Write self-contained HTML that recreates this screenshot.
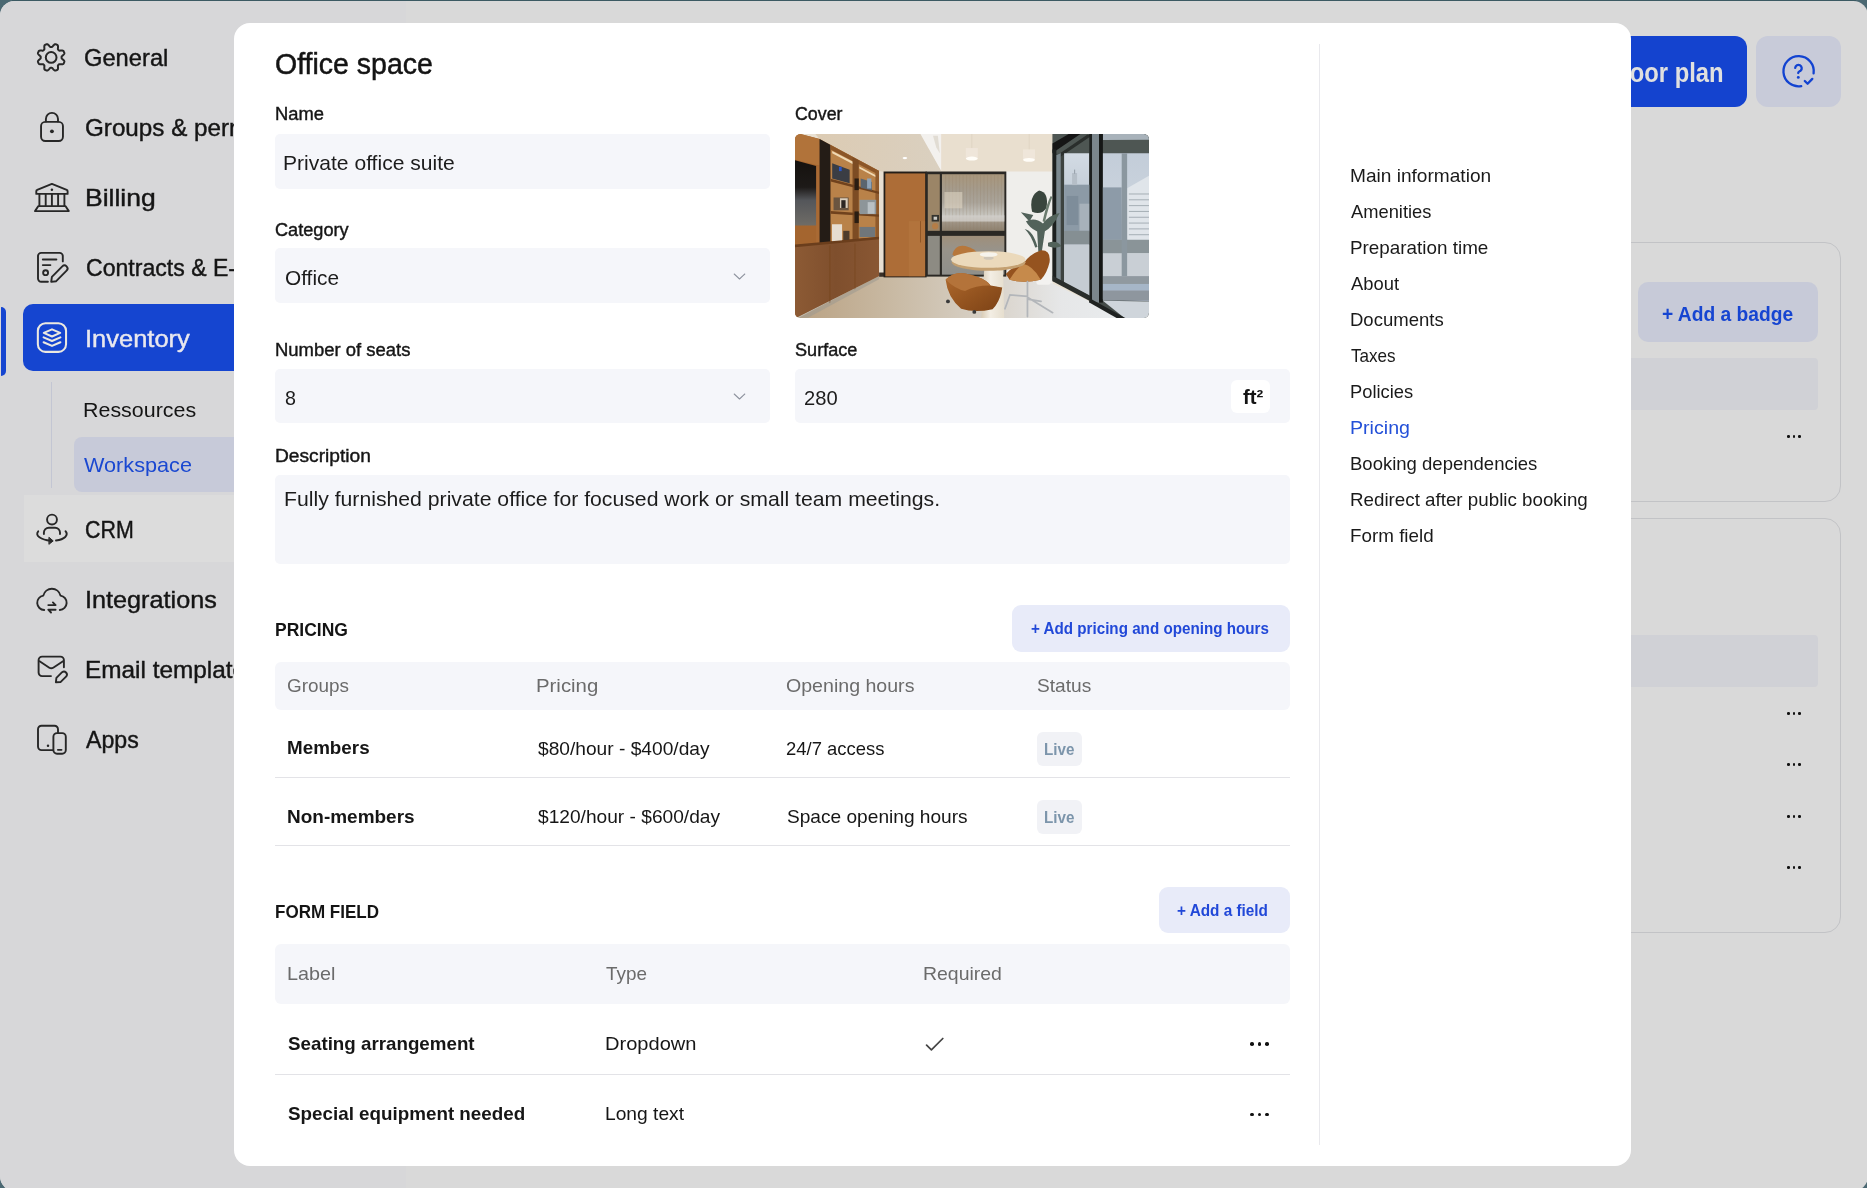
<!DOCTYPE html>
<html lang="en"><head><meta charset="utf-8"><title>Office space</title>
<style>
html,body{margin:0;padding:0}
body{width:1867px;height:1188px;overflow:hidden;background:#4b6872;font-family:"Liberation Sans",sans-serif;position:relative}
.abs,.t,.box,.dot{position:absolute}
.t{white-space:nowrap;line-height:1;transform-origin:0 0;left:0;top:0}
.dot{border-radius:50%;display:block}
.txt{position:absolute;left:0;top:0;width:100%;height:100%;will-change:transform}
#app{position:absolute;left:-.5px;top:1px;width:1868.2px;height:1189.8px;border-radius:14.7px;background:#d9d9d9;overflow:hidden}
#appin{position:absolute;left:.5px;top:-1px;width:1867px;height:1188px}
#side{position:absolute;left:0;top:0;width:406px;height:1188px;background:#d7d7d9}
.hl{left:24px;top:494.5px;width:382px;height:67px;background:#dcdcdc}
.ind{left:.9px;top:307px;width:5.3px;height:69px;border-radius:0 5px 5px 0;background:#1545d0}
.pill{left:23.1px;top:303.7px;width:300px;height:67.7px;border-radius:10px;background:#1545d0}
.vline{left:51px;top:382px;width:1px;height:106px;background:#c3c6d3}
.sub{left:74px;top:437px;width:250px;height:54.5px;border-radius:8px;background:#c7cad9}
.btnblue{left:1500px;top:35.5px;width:247px;height:71.5px;border-radius:12px;background:#1443cf}
.btnhelp{left:1755.75px;top:35.5px;width:85px;height:71.5px;border-radius:12px;background:#c8cbd9}
.card{border:1px solid #c2c3c6;border-radius:16px;box-sizing:border-box}
.badge{left:1638px;top:281.5px;width:180px;height:60px;border-radius:10px;background:#c7cad8}
.grow{background:#d0d1d6;border-radius:4px}
#modal{position:absolute;left:234px;top:23px;width:1397.3px;height:1142.5px;border-radius:16px;background:#fff;overflow:hidden}
.in{background:#f5f6fa;border-radius:5px}
.th{background:#f5f6fa;border-radius:6px}
.ln{background:#e3e3e7}
.btn{background:#e8ebf9;border-radius:9px}
.live{background:#f1f2f6;border-radius:6px}
.unit{background:#fff;border-radius:6px}
</style></head>
<body>
<div class="abs" style="left:12px;top:0;width:1844px;height:1px;background:#3c5a63"></div>
<div id="app"><div id="appin">
<aside id="side">
<div class="box hl"></div>
<div class="box ind"></div>
<div class="box pill"></div>
<div class="box vline"></div>
<div class="box sub"></div>
<svg class="abs" width="234" height="800" viewBox="0 0 234 800" fill="none" stroke="#272727" stroke-width="1.9" stroke-linecap="round" stroke-linejoin="round"><path d="M51.15 46.95 L51.28 46.95 L51.41 46.95 L51.53 46.96 L51.66 46.96 L51.79 46.96 L51.92 46.93 L52.06 46.87 L52.20 46.79 L52.34 46.66 L52.49 46.50 L52.65 46.32 L52.82 46.12 L53.00 45.92 L53.18 45.71 L53.36 45.51 L53.55 45.31 L53.75 45.12 L53.95 44.93 L54.16 44.74 L54.36 44.57 L54.57 44.42 L54.77 44.30 L54.97 44.23 L55.16 44.19 L55.34 44.18 L55.51 44.21 L55.67 44.26 L55.83 44.31 L55.99 44.37 L56.15 44.43 L56.31 44.49 L56.47 44.56 L56.63 44.62 L56.78 44.69 L56.94 44.76 L57.09 44.83 L57.25 44.91 L57.40 44.99 L57.53 45.09 L57.66 45.22 L57.76 45.38 L57.85 45.58 L57.91 45.80 L57.95 46.05 L57.98 46.32 L57.99 46.60 L58.00 46.88 L58.00 47.15 L57.99 47.43 L57.98 47.70 L57.96 47.97 L57.94 48.24 L57.92 48.50 L57.90 48.75 L57.90 48.96 L57.92 49.16 L57.95 49.32 L58.01 49.45 L58.08 49.56 L58.17 49.66 L58.26 49.74 L58.36 49.83 L58.45 49.92 L58.54 50.01 L58.63 50.10 L58.72 50.19 L58.81 50.29 L58.89 50.38 L58.99 50.47 L59.10 50.54 L59.23 50.60 L59.39 50.63 L59.59 50.65 L59.80 50.65 L60.05 50.63 L60.31 50.61 L60.58 50.59 L60.85 50.57 L61.12 50.56 L61.40 50.55 L61.67 50.55 L61.95 50.56 L62.23 50.57 L62.50 50.60 L62.75 50.64 L62.97 50.70 L63.17 50.79 L63.33 50.89 L63.46 51.02 L63.56 51.15 L63.64 51.30 L63.72 51.46 L63.79 51.61 L63.86 51.77 L63.93 51.92 L63.99 52.08 L64.06 52.24 L64.12 52.40 L64.18 52.56 L64.24 52.72 L64.29 52.88 L64.34 53.04 L64.37 53.21 L64.36 53.39 L64.32 53.58 L64.25 53.78 L64.13 53.98 L63.98 54.19 L63.81 54.39 L63.62 54.60 L63.43 54.80 L63.24 55.00 L63.04 55.19 L62.84 55.37 L62.63 55.55 L62.43 55.73 L62.23 55.90 L62.05 56.06 L61.89 56.21 L61.76 56.35 L61.68 56.49 L61.62 56.63 L61.59 56.76 L61.59 56.89 L61.59 57.02 L61.60 57.14 L61.60 57.27 L61.60 57.40 L61.60 57.53 L61.60 57.66 L61.59 57.78 L61.59 57.91 L61.59 58.04 L61.62 58.17 L61.68 58.31 L61.76 58.45 L61.89 58.59 L62.05 58.74 L62.23 58.90 L62.43 59.07 L62.63 59.25 L62.84 59.43 L63.04 59.61 L63.24 59.80 L63.43 60.00 L63.62 60.20 L63.81 60.41 L63.98 60.61 L64.13 60.82 L64.25 61.02 L64.32 61.22 L64.36 61.41 L64.37 61.59 L64.34 61.76 L64.29 61.92 L64.24 62.08 L64.18 62.24 L64.12 62.40 L64.06 62.56 L63.99 62.72 L63.93 62.88 L63.86 63.03 L63.79 63.19 L63.72 63.34 L63.64 63.50 L63.56 63.65 L63.46 63.78 L63.33 63.91 L63.17 64.01 L62.97 64.10 L62.75 64.16 L62.50 64.20 L62.23 64.23 L61.95 64.24 L61.67 64.25 L61.40 64.25 L61.12 64.24 L60.85 64.23 L60.58 64.21 L60.31 64.19 L60.05 64.17 L59.80 64.15 L59.59 64.15 L59.39 64.17 L59.23 64.20 L59.10 64.26 L58.99 64.33 L58.89 64.42 L58.81 64.51 L58.72 64.61 L58.63 64.70 L58.54 64.79 L58.45 64.88 L58.36 64.97 L58.26 65.06 L58.17 65.14 L58.08 65.24 L58.01 65.35 L57.95 65.48 L57.92 65.64 L57.90 65.84 L57.90 66.05 L57.92 66.30 L57.94 66.56 L57.96 66.83 L57.98 67.10 L57.99 67.37 L58.00 67.65 L58.00 67.92 L57.99 68.20 L57.98 68.48 L57.95 68.75 L57.91 69.00 L57.85 69.22 L57.76 69.42 L57.66 69.58 L57.53 69.71 L57.40 69.81 L57.25 69.89 L57.09 69.97 L56.94 70.04 L56.78 70.11 L56.63 70.18 L56.47 70.24 L56.31 70.31 L56.15 70.37 L55.99 70.43 L55.83 70.49 L55.67 70.54 L55.51 70.59 L55.34 70.62 L55.16 70.61 L54.97 70.57 L54.77 70.50 L54.57 70.38 L54.36 70.23 L54.16 70.06 L53.95 69.87 L53.75 69.68 L53.55 69.49 L53.36 69.29 L53.18 69.09 L53.00 68.88 L52.82 68.68 L52.65 68.48 L52.49 68.30 L52.34 68.14 L52.20 68.01 L52.06 67.93 L51.92 67.87 L51.79 67.84 L51.66 67.84 L51.53 67.84 L51.41 67.85 L51.28 67.85 L51.15 67.85 L51.02 67.85 L50.89 67.85 L50.77 67.84 L50.64 67.84 L50.51 67.84 L50.38 67.87 L50.24 67.93 L50.10 68.01 L49.96 68.14 L49.81 68.30 L49.65 68.48 L49.48 68.68 L49.30 68.88 L49.12 69.09 L48.94 69.29 L48.75 69.49 L48.55 69.68 L48.35 69.87 L48.14 70.06 L47.94 70.23 L47.73 70.38 L47.53 70.50 L47.33 70.57 L47.14 70.61 L46.96 70.62 L46.79 70.59 L46.63 70.54 L46.47 70.49 L46.31 70.43 L46.15 70.37 L45.99 70.31 L45.83 70.24 L45.67 70.18 L45.52 70.11 L45.36 70.04 L45.21 69.97 L45.05 69.89 L44.90 69.81 L44.77 69.71 L44.64 69.58 L44.54 69.42 L44.45 69.22 L44.39 69.00 L44.35 68.75 L44.32 68.48 L44.31 68.20 L44.30 67.92 L44.30 67.65 L44.31 67.37 L44.32 67.10 L44.34 66.83 L44.36 66.56 L44.38 66.30 L44.40 66.05 L44.40 65.84 L44.38 65.64 L44.35 65.48 L44.29 65.35 L44.22 65.24 L44.13 65.14 L44.04 65.06 L43.94 64.97 L43.85 64.88 L43.76 64.79 L43.67 64.70 L43.58 64.61 L43.49 64.51 L43.41 64.42 L43.31 64.33 L43.20 64.26 L43.07 64.20 L42.91 64.17 L42.71 64.15 L42.50 64.15 L42.25 64.17 L41.99 64.19 L41.72 64.21 L41.45 64.23 L41.18 64.24 L40.90 64.25 L40.63 64.25 L40.35 64.24 L40.07 64.23 L39.80 64.20 L39.55 64.16 L39.33 64.10 L39.13 64.01 L38.97 63.91 L38.84 63.78 L38.74 63.65 L38.66 63.50 L38.58 63.34 L38.51 63.19 L38.44 63.03 L38.37 62.88 L38.31 62.72 L38.24 62.56 L38.18 62.40 L38.12 62.24 L38.06 62.08 L38.01 61.92 L37.96 61.76 L37.93 61.59 L37.94 61.41 L37.98 61.22 L38.05 61.02 L38.17 60.82 L38.32 60.61 L38.49 60.41 L38.68 60.20 L38.87 60.00 L39.06 59.80 L39.26 59.61 L39.46 59.43 L39.67 59.25 L39.87 59.07 L40.07 58.90 L40.25 58.74 L40.41 58.59 L40.54 58.45 L40.62 58.31 L40.68 58.17 L40.71 58.04 L40.71 57.91 L40.71 57.78 L40.70 57.66 L40.70 57.53 L40.70 57.40 L40.70 57.27 L40.70 57.14 L40.71 57.02 L40.71 56.89 L40.71 56.76 L40.68 56.63 L40.62 56.49 L40.54 56.35 L40.41 56.21 L40.25 56.06 L40.07 55.90 L39.87 55.73 L39.67 55.55 L39.46 55.37 L39.26 55.19 L39.06 55.00 L38.87 54.80 L38.68 54.60 L38.49 54.39 L38.32 54.19 L38.17 53.98 L38.05 53.78 L37.98 53.58 L37.94 53.39 L37.93 53.21 L37.96 53.04 L38.01 52.88 L38.06 52.72 L38.12 52.56 L38.18 52.40 L38.24 52.24 L38.31 52.08 L38.37 51.92 L38.44 51.77 L38.51 51.61 L38.58 51.46 L38.66 51.30 L38.74 51.15 L38.84 51.02 L38.97 50.89 L39.13 50.79 L39.33 50.70 L39.55 50.64 L39.80 50.60 L40.07 50.57 L40.35 50.56 L40.63 50.55 L40.90 50.55 L41.18 50.56 L41.45 50.57 L41.72 50.59 L41.99 50.61 L42.25 50.63 L42.50 50.65 L42.71 50.65 L42.91 50.63 L43.07 50.60 L43.20 50.54 L43.31 50.47 L43.41 50.38 L43.49 50.29 L43.58 50.19 L43.67 50.10 L43.76 50.01 L43.85 49.92 L43.94 49.83 L44.04 49.74 L44.13 49.66 L44.22 49.56 L44.29 49.45 L44.35 49.32 L44.38 49.16 L44.40 48.96 L44.40 48.75 L44.38 48.50 L44.36 48.24 L44.34 47.97 L44.32 47.70 L44.31 47.43 L44.30 47.15 L44.30 46.88 L44.31 46.60 L44.32 46.32 L44.35 46.05 L44.39 45.80 L44.45 45.58 L44.54 45.38 L44.64 45.22 L44.77 45.09 L44.90 44.99 L45.05 44.91 L45.21 44.83 L45.36 44.76 L45.52 44.69 L45.67 44.62 L45.83 44.56 L45.99 44.49 L46.15 44.43 L46.31 44.37 L46.47 44.31 L46.63 44.26 L46.79 44.21 L46.96 44.18 L47.14 44.19 L47.33 44.23 L47.53 44.30 L47.73 44.42 L47.94 44.57 L48.14 44.74 L48.35 44.93 L48.55 45.12 L48.75 45.31 L48.94 45.51 L49.12 45.71 L49.30 45.92 L49.48 46.12 L49.65 46.32 L49.81 46.50 L49.96 46.66 L50.10 46.79 L50.24 46.87 L50.38 46.93 L50.51 46.96 L50.64 46.96 L50.77 46.96 L50.89 46.95 L51.02 46.95Z" stroke-width="2"/><circle cx="51.15" cy="57.4" r="5.35" stroke-width="2"/><rect x="41.05" y="121.85" width="21.9" height="19.2" rx="4.2"/><path d="M45.9 121.6V118.9a6.05 6.05 0 0 1 12.1 0V121.6"/><circle cx="51.95" cy="131.3" r="1.9" fill="#272727" stroke="none"/><path d="M51.9 183.9L37.2 189.9a1.4 1.4 0 0 0-.9 1.3V193.9H67.6V191.2a1.4 1.4 0 0 0-.9-1.3Z"/><circle cx="51.9" cy="189.7" r="1.25" fill="#272727" stroke="none"/><path d="M39.4 194V206M45.7 194V206M51.9 194V206M58.1 194V206M64.4 194V206M38.6 206.1H65.2M38.2 206.3L35 211.1H68.8L65.6 206.3"/><path d="M47.9 281.8H41.2a3.2 3.2 0 0 1-3.2-3.2V256.1a3.2 3.2 0 0 1 3.2-3.2H59.6a3.2 3.2 0 0 1 3.2 3.2V261.4"/><path d="M42.8 259.5H56.4M42.8 265.1H50.4"/><circle cx="45.6" cy="272.7" r="2.45"/><path d="M51.2 281.9L51.9 276.9L62.3 266.4a3 3 0 0 1 4.3 4.3L56.2 281.2Z"/><circle cx="52" cy="519.6" r="4.95"/><path d="M43.9 534.1V532.6a4.9 4.9 0 0 1 4.9-4.9H55.1a4.9 4.9 0 0 1 4.9 4.9V534.1"/><path d="M38.2 531.3C34.6 535.5 41 539.8 50.6 540.7M56 540.5C64.5 539.3 69 535.3 65.5 531.2"/><path d="M49.2 537.5L53.2 540.9L49.2 544.1Z" fill="#272727" stroke-width="1"/><path d="M44.2 610A7.25 7.25 0 0 1 43.3 595.6A8.84 8.84 0 0 1 60.5 595.6A7.25 7.25 0 0 1 59.8 610"/><path d="M48.3 605.1H55.6L52.9 602.4M55.6 609.7H48.3L51 612.5"/><path d="M51 676.1H42.1a3.5 3.5 0 0 1-3.5-3.5V660.1a3.5 3.5 0 0 1 3.5-3.5H60.4a3.5 3.5 0 0 1 3.5 3.5V667.3"/><path d="M39.6 661.2L49.3 667.7a3.6 3.6 0 0 0 3.9 0L63 661.2"/><path d="M55.9 682.2L56.4 677.9L62.1 672.2a3 3 0 0 1 4.2 4.2L60.5 682.1Z"/><path d="M53 750.1H41.5a3.5 3.5 0 0 1-3.5-3.5V729.2a3.5 3.5 0 0 1 3.5-3.5H54.5a3.5 3.5 0 0 1 3.5 3.5V732.6"/><circle cx="48" cy="745.8" r="1.25" fill="#272727" stroke="none"/><rect x="53.4" y="733.1" width="12.4" height="20.6" rx="3.6"/><path d="M57.9 749.85H61.5"/></svg>
<svg class="abs" style="left:30px;top:315px" width="44" height="44" viewBox="30 315 44 44" fill="none" stroke="#ece9e0" stroke-width="2.05" stroke-linecap="round" stroke-linejoin="round"><rect x="37.85" y="323.25" width="28.2" height="28.6" rx="7.6"/><path d="M52 329.4L60.2 332.9L52 336.5L43.8 332.9Z"/><path d="M43.6 337.4L52 341L60.4 337.4M43.6 342.2L52 345.9L60.4 342.2"/></svg>
<div class="txt">
<span class="t" style="left:84px;top:46px;font-size:24.1px;color:#151515;-webkit-text-stroke:0.42px #151515;transform:scaleX(0.9838)">General</span>
<span class="t" style="left:85px;top:116px;font-size:24.1px;color:#151515;-webkit-text-stroke:0.42px #151515;transform:scaleX(1.0050)">Groups &amp; permissions</span>
<span class="t" style="left:85px;top:186px;font-size:24.1px;color:#151515;-webkit-text-stroke:0.42px #151515;transform:scaleX(1.1008)">Billing</span>
<span class="t" style="left:86px;top:256px;font-size:24.1px;color:#151515;-webkit-text-stroke:0.42px #151515;transform:scaleX(0.9577)">Contracts &amp; E-signatures</span>
<span class="t" style="left:85px;top:327px;font-size:24.1px;color:#e9e8ee;-webkit-text-stroke:0.42px #e9e8ee;transform:scaleX(1.0571)">Inventory</span>
<span class="t" style="left:83px;top:400px;font-size:20.6px;color:#141414;transform:scaleX(1.0405)">Ressources</span>
<span class="t" style="left:84px;top:455px;font-size:20.4px;color:#1a48d1;transform:scaleX(1.0621)">Workspace</span>
<span class="t" style="left:85px;top:518px;font-size:24.1px;color:#151515;-webkit-text-stroke:0.42px #151515;transform:scaleX(0.8879)">CRM</span>
<span class="t" style="left:85px;top:588px;font-size:24.1px;color:#151515;-webkit-text-stroke:0.42px #151515;transform:scaleX(1.0468)">Integrations</span>
<span class="t" style="left:85px;top:658px;font-size:24.1px;color:#151515;-webkit-text-stroke:0.42px #151515;transform:scaleX(1.0110)">Email templates</span>
<span class="t" style="left:86px;top:728px;font-size:24.1px;color:#151515;-webkit-text-stroke:0.42px #151515;transform:scaleX(0.9605)">Apps</span>
</div>
</aside>
<main id="main">
<div class="box btnblue"></div>
<div class="box btnhelp"></div>
<svg class="abs" style="left:1775px;top:48px" width="48" height="48" viewBox="1775 48 48 48" fill="none" stroke="#1243d1" stroke-width="2.3" stroke-linecap="round" stroke-linejoin="round"><path d="M1813.60 73.36A15.15 15.15 0 1 0 1801.23 86.17"/><path d="M1804.8 81L1807.6 83.8L1812.3 78.9"/><path d="M1795.2 67.9a3.27 3.27 0 1 1 5.4 2.8c-1.4 .9-2.4 1.3-2.4 2.4"/><circle cx="1798.3" cy="77.4" r="1.45" fill="#1243d1" stroke="none"/></svg>
<div class="box card" style="left:1500px;top:241.5px;width:341px;height:260px"></div>
<div class="box card" style="left:1500px;top:518px;width:341px;height:414.5px"></div>
<div class="box badge"></div>
<div class="box grow" style="left:1500px;top:358px;width:318px;height:52px"></div>
<div class="box grow" style="left:1500px;top:634.5px;width:318px;height:52.5px"></div>
<i class="dot" style="left:1787.45px;top:435.20px;width:2.60px;height:2.60px;background:#111"></i><i class="dot" style="left:1792.70px;top:435.20px;width:2.60px;height:2.60px;background:#111"></i><i class="dot" style="left:1797.95px;top:435.20px;width:2.60px;height:2.60px;background:#111"></i>
<i class="dot" style="left:1787.45px;top:711.95px;width:2.60px;height:2.60px;background:#111"></i><i class="dot" style="left:1792.70px;top:711.95px;width:2.60px;height:2.60px;background:#111"></i><i class="dot" style="left:1797.95px;top:711.95px;width:2.60px;height:2.60px;background:#111"></i>
<i class="dot" style="left:1787.45px;top:763.45px;width:2.60px;height:2.60px;background:#111"></i><i class="dot" style="left:1792.70px;top:763.45px;width:2.60px;height:2.60px;background:#111"></i><i class="dot" style="left:1797.95px;top:763.45px;width:2.60px;height:2.60px;background:#111"></i>
<i class="dot" style="left:1787.45px;top:814.95px;width:2.60px;height:2.60px;background:#111"></i><i class="dot" style="left:1792.70px;top:814.95px;width:2.60px;height:2.60px;background:#111"></i><i class="dot" style="left:1797.95px;top:814.95px;width:2.60px;height:2.60px;background:#111"></i>
<i class="dot" style="left:1787.45px;top:866.20px;width:2.60px;height:2.60px;background:#111"></i><i class="dot" style="left:1792.70px;top:866.20px;width:2.60px;height:2.60px;background:#111"></i><i class="dot" style="left:1797.95px;top:866.20px;width:2.60px;height:2.60px;background:#111"></i>
<div class="txt">
<span class="t" style="left:1523px;top:59px;font-size:27.6px;font-weight:700;color:#e0e0df;transform:scaleX(0.8619)">+ Add a floor plan</span>
<span class="t" style="left:1662px;top:304px;font-size:20.1px;font-weight:700;color:#1645d1;transform:scaleX(0.9561)">+ Add a badge</span>
</div>
</main>
</div></div>
<section id="modal">
<div class="box in" style="left:41px;top:110.75px;width:495px;height:55px;"></div>
<div class="box in" style="left:41px;top:225.25px;width:495px;height:55px;"></div>
<div class="box in" style="left:41px;top:345.5px;width:495px;height:54.75px;"></div>
<div class="box in" style="left:560.5px;top:345.5px;width:495.3px;height:54.75px;"></div>
<div class="box in" style="left:41px;top:452px;width:1014.5px;height:89px;"></div>
<div class="box unit" style="left:996.6px;top:356.5px;width:39.1px;height:33.7px;"></div>
<svg class="abs" style="left:499.25px;top:248.8px" width="14" height="10" viewBox="0 0 14 10" fill="none" stroke="#8d929d" stroke-width="1.05" stroke-linecap="round" stroke-linejoin="round"><path d="M1.2 2L6.5 7L11.8 2"/></svg>
<svg class="abs" style="left:499.25px;top:368.9px" width="14" height="10" viewBox="0 0 14 10" fill="none" stroke="#8d929d" stroke-width="1.05" stroke-linecap="round" stroke-linejoin="round"><path d="M1.2 2L6.5 7L11.8 2"/></svg>
<div class="box btn" style="left:778px;top:582px;width:277.5px;height:47px;"></div>
<div class="box th" style="left:41px;top:639px;width:1014.5px;height:47.75px;"></div>
<div class="box ln" style="left:41px;top:753.7px;width:1014.5px;height:1.1px;"></div>
<div class="box ln" style="left:41px;top:821.6px;width:1014.5px;height:1.1px;"></div>
<div class="box live" style="left:802.5px;top:709.25px;width:45.5px;height:33.75px;"></div>
<div class="box live" style="left:802.5px;top:777.25px;width:45.5px;height:33.75px;"></div>
<div class="box btn" style="left:925px;top:863.75px;width:130.5px;height:46.25px;"></div>
<div class="box th" style="left:41px;top:920.5px;width:1014.5px;height:60px;"></div>
<div class="box ln" style="left:41px;top:1050.5px;width:1014.5px;height:1.1px;"></div>
<div class="box " style="left:1085.1px;top:20.5px;width:1.25px;height:1101.5px;background:#e9e9ed"></div>
<svg class="abs" style="left:691px;top:1013.6px" width="20" height="15" viewBox="0 0 20 15" fill="none" stroke="#444" stroke-width="1.7" stroke-linecap="round" stroke-linejoin="round"><path d="M1.6 8.2L6.4 12.9L17.8 1.5"/></svg>
<div class="abs" style="left:-234px;top:-23px"><i class="dot" style="left:1250.00px;top:1042.25px;width:3.50px;height:3.50px;background:#111"></i><i class="dot" style="left:1257.50px;top:1042.25px;width:3.50px;height:3.50px;background:#111"></i><i class="dot" style="left:1265.00px;top:1042.25px;width:3.50px;height:3.50px;background:#111"></i><i class="dot" style="left:1250.00px;top:1112.75px;width:3.50px;height:3.50px;background:#111"></i><i class="dot" style="left:1257.50px;top:1112.75px;width:3.50px;height:3.50px;background:#111"></i><i class="dot" style="left:1265.00px;top:1112.75px;width:3.50px;height:3.50px;background:#111"></i></div>
<svg class="abs" style="left:560.5px;top:111px;border-radius:5.5px" width="354" height="183.5" viewBox="0 0 354 183.5"><defs><linearGradient id="gTv" x1="0" y1="0" x2="0" y2="1"><stop offset="0" stop-color="#15110e"/><stop offset=".42" stop-color="#1d1a18"/><stop offset=".62" stop-color="#54565a"/><stop offset="1" stop-color="#6f6c66"/></linearGradient><linearGradient id="gGl" x1="0" y1="0" x2="0" y2="1"><stop offset="0" stop-color="#a8967b"/><stop offset=".3" stop-color="#a59c8e"/><stop offset=".5" stop-color="#aaa49a"/><stop offset=".72" stop-color="#c6c4be"/><stop offset=".86" stop-color="#9e9384"/><stop offset="1" stop-color="#8e816f"/></linearGradient><linearGradient id="gGl2" x1="0" y1="0" x2="0" y2="1"><stop offset="0" stop-color="#9f8f7a"/><stop offset=".35" stop-color="#98938a"/><stop offset="1" stop-color="#8f8f8b"/></linearGradient><linearGradient id="gFl" x1="0" y1="0" x2="1" y2="0"><stop offset="0" stop-color="#b9a182"/><stop offset=".3" stop-color="#c9baa4"/><stop offset=".6" stop-color="#d9d3ca"/><stop offset=".8" stop-color="#e6e7e8"/><stop offset="1" stop-color="#e9ecee"/></linearGradient><linearGradient id="gW1" x1="0" y1="0" x2="0" y2="1"><stop offset="0" stop-color="#d3dbe4"/><stop offset=".3" stop-color="#c2ccd6"/><stop offset=".45" stop-color="#9aa5ae"/><stop offset=".7" stop-color="#a9b1b8"/><stop offset="1" stop-color="#c2c8cd"/></linearGradient><linearGradient id="gW2" x1="0" y1="0" x2="0" y2="1"><stop offset="0" stop-color="#c3cdd9"/><stop offset=".28" stop-color="#c9d2dc"/><stop offset=".5" stop-color="#a3adb6"/><stop offset=".75" stop-color="#b3bac1"/><stop offset="1" stop-color="#a9b4c6"/></linearGradient><linearGradient id="gCb" x1="0" y1="0" x2="1" y2="0"><stop offset="0" stop-color="#8d5b35"/><stop offset=".5" stop-color="#7f4f2d"/><stop offset="1" stop-color="#895733"/></linearGradient><linearGradient id="gCh" x1="0" y1="0" x2="1" y2="1"><stop offset="0" stop-color="#b06a2e"/><stop offset=".55" stop-color="#93531f"/><stop offset="1" stop-color="#7c4216"/></linearGradient><linearGradient id="gPed" x1="0" y1="0" x2="1" y2="0"><stop offset="0" stop-color="#d9ccb6"/><stop offset=".4" stop-color="#f3eee4"/><stop offset="1" stop-color="#e6dece"/></linearGradient><linearGradient id="gCe" x1="0" y1="0" x2="1" y2="0"><stop offset="0" stop-color="#dccbb3"/><stop offset="1" stop-color="#dad0c0"/></linearGradient></defs><g transform="translate(-4.5 -4) scale(0.19391)"><rect x="0" y="0" width="1880" height="1000" fill="#e9e1d3"/><polygon points="120,10 668,10 778,210 462,216 150,48" fill="url(#gCe)"/><polygon points="664,10 778,10 778,212" fill="#f3f1ee"/><polygon points="735,30 760,30 770,120 752,90" fill="#e1dcd3"/><rect x="778" y="10" width="575" height="208" fill="#e9dfcf"/><polygon points="1110,214 1352,214 1352,795 1110,752" fill="#efeeeb"/><rect x="904" y="93" width="62" height="52" fill="#efe6da"/><ellipse cx="935" cy="147" rx="31" ry="10" fill="#fffdf8"/><rect x="934" y="20" width="3" height="73" fill="#d9cdbb"/><rect x="1199" y="100" width="62" height="52" fill="#efe6da"/><ellipse cx="1230" cy="154" rx="31" ry="10" fill="#fffdf8"/><rect x="1229" y="20" width="3" height="80" fill="#d9cdbb"/><ellipse cx="590" cy="145" rx="12" ry="6" fill="#fff"/><polygon points="20,980 455,750 1112,750 1352,792 1740,980" fill="url(#gFl)"/><polygon points="10,10 150,46 457,212 457,753 30,968 10,970" fill="#a4652f"/><polygon points="10,10 150,46 150,185 10,150" fill="#b1733a"/><polygon points="132,185 150,185 150,590 132,592" fill="#a96a34"/><polygon points="150,46 207,78 207,585 150,592" fill="#241c16"/><polygon points="207,78 457,212 457,560 207,586" fill="#b98249"/><polygon points="207,78 457,212 457,232 207,100" fill="#8c5628"/><polygon points="215,108 330,168 330,180 215,120" fill="#f0d9b4"/><polygon points="355,188 445,236 445,246 355,198" fill="#f0d9b4"/><polygon points="320,140 352,157 352,572 320,575" fill="#7d4c23"/><polygon points="438,205 457,214 457,560 438,562" fill="#8f5a2c"/><polygon points="207,252 457,318 457,330 207,266" fill="#70421d"/><polygon points="207,418 457,436 457,448 207,432" fill="#70421d"/><polygon points="207,574 457,550 457,562 207,588" fill="#6a3d1b"/><polygon points="215,172 305,205 305,275 215,250" fill="#3a3d44"/><rect x="250" y="190" width="14" height="22" fill="#2a56c8"/><polygon points="362,250 420,268 420,312 362,298" fill="#5a656f"/><rect x="395" y="250" width="22" height="52" fill="#8fa4b8"/><rect x="222" y="348" width="78" height="66" fill="#6a5540"/><rect x="255" y="352" width="40" height="50" fill="#d9cdbb"/><rect x="262" y="362" width="22" height="40" fill="#2b2622"/><rect x="356" y="360" width="86" height="74" fill="#8d9599"/><rect x="398" y="372" width="36" height="60" fill="#b9c0c4"/><rect x="214" y="486" width="52" height="90" fill="#e6ddd0"/><rect x="272" y="520" width="32" height="50" fill="#4d3b2b"/><rect x="356" y="500" width="80" height="52" fill="#70767a"/><rect x="330" y="250" width="22" height="60" fill="#2a1d12"/><rect x="330" y="420" width="22" height="60" fill="#2a1d12"/><polygon points="10,152 132,186 132,492 10,492" fill="url(#gTv)"/><polygon points="10,600 457,558 457,753 30,968 10,970" fill="url(#gCb)"/><polygon points="10,592 457,552 457,564 10,606" fill="#6b3e1c"/><polygon points="200,596 206,596 206,890 200,893" fill="#7a4922"/><polygon points="330,585 335,585 335,820 330,823" fill="#7a4922"/><polygon points="457,212 486,216 486,758 457,753" fill="#e8dfd1"/><rect x="457" y="735" width="29" height="22" fill="#3a2f26"/><rect x="480" y="214" width="222" height="546" fill="#241e18"/><rect x="489" y="224" width="206" height="531" fill="#ad6d37"/><rect x="610" y="470" width="85" height="285" fill="#c0844a" opacity=".28"/><rect x="668" y="470" width="5" height="110" fill="#8e5526"/><rect x="697" y="214" width="416" height="542" fill="#2a2824"/><rect x="708" y="228" width="62" height="292" fill="#9b8567"/><rect x="781" y="228" width="322" height="292" fill="url(#gGl)"/><rect x="708" y="546" width="62" height="200" fill="#8d8b83"/><rect x="781" y="546" width="322" height="200" fill="url(#gGl2)"/><rect x="728" y="438" width="38" height="34" fill="#33332f"/><rect x="738" y="447" width="18" height="16" fill="#c9c9c4"/><circle cx="746" cy="496" r="16" fill="#b47d47"/><g stroke="#8e7a62" stroke-width="3" opacity=".35"><path d="M800 232V516"/><path d="M818 232V516"/><path d="M836 232V516"/><path d="M854 232V516"/><path d="M872 232V516"/><path d="M890 232V516"/><path d="M908 232V516"/><path d="M926 232V516"/><path d="M944 232V516"/><path d="M962 232V516"/><path d="M980 232V516"/><path d="M998 232V516"/><path d="M1016 232V516"/><path d="M1034 232V516"/><path d="M1052 232V516"/><path d="M1070 232V516"/><path d="M1088 232V516"/></g><rect x="781" y="440" width="322" height="32" fill="#d4d2cd" opacity=".75"/><rect x="794" y="320" width="92" height="84" fill="#ddd3c2" opacity=".6"/><polygon points="30,968 457,753 457,770 90,968" fill="#9c9990" opacity=".55"/><polygon points="1352,10 1860,10 1860,980 1735,980 1352,775" fill="#454c49"/><rect x="1352" y="10" width="510" height="112" fill="#4e5653"/><polygon points="1611,10 1860,10 1860,50 1611,52" fill="#a8b2ba"/><polygon points="1351,70 1351,118 1496,20 1436,20" fill="#151515"/><polygon points="1360,140 1360,160 1560,24 1530,24" fill="#2a2e2c"/><rect x="1351" y="100" width="20" height="680" fill="#1d201f"/><polygon points="1371,130 1394,118 1394,776 1371,765" fill="#7c898f"/><rect x="1394" y="118" width="17" height="670" fill="#30353360"/><polygon points="1411,120 1541,120 1541,854 1411,787" fill="url(#gW1)"/><rect x="1541" y="10" width="14" height="880" fill="#1c1f1e"/><rect x="1555" y="10" width="36" height="880" fill="#7b868c"/><rect x="1591" y="10" width="20" height="880" fill="#151716"/><polygon points="1611,120 1860,120 1860,884 1611,872" fill="url(#gW2)"/><rect x="1411" y="282" width="130" height="240" fill="#8c9aa6"/><rect x="1452" y="222" width="26" height="62" fill="#b5bec7"/><rect x="1462" y="204" width="6" height="22" fill="#9aa4ad"/><rect x="1424" y="340" width="60" height="150" fill="#7e8d9a"/><rect x="1490" y="380" width="50" height="140" fill="#a7b1ba"/><rect x="1411" y="520" width="130" height="70" fill="#858f93"/><polygon points="1411,590 1541,590 1541,854 1411,787" fill="#c5ccd3"/><rect x="1611" y="296" width="97" height="270" fill="#8d9ba8"/><polygon points="1736,300 1860,230 1860,650 1736,650" fill="#e0e5ea"/><g stroke="#a3acb4" stroke-width="5"><path d="M1745 330H1860"/><path d="M1745 360H1860"/><path d="M1745 390H1860"/><path d="M1745 420H1860"/><path d="M1745 450H1860"/><path d="M1745 480H1860"/><path d="M1745 510H1860"/><path d="M1745 540H1860"/><path d="M1745 570H1860"/><path d="M1745 600H1860"/><path d="M1745 630H1860"/></g><rect x="1611" y="566" width="249" height="70" fill="#8a9498"/><rect x="1611" y="636" width="249" height="118" fill="#c9cfd5"/><rect x="1708" y="120" width="28" height="634" fill="#8b979f"/><rect x="1611" y="754" width="249" height="40" fill="#9099a0"/><rect x="1611" y="794" width="249" height="34" fill="#a6b6c8"/><rect x="1611" y="828" width="249" height="52" fill="#8e969e"/><polygon points="1611,880 1860,884 1860,980 1735,980" fill="#cfd5db"/><polygon points="1541,866 1541,890 1700,980 1745,980" fill="#1f2221"/><polygon points="1352,752 1352,780 1541,880 1541,852" fill="#2a2e2c"/><rect x="1268" y="628" width="74" height="170" rx="12" fill="#f3f2f0"/><path d="M1246 422Q1228 340 1282 312Q1334 322 1320 402Q1292 442 1246 422Z" fill="#39453d"/><path d="M1188 424L1252 438L1232 472ZM1214 470Q1262 448 1302 482Q1332 440 1388 428Q1352 502 1312 522L1296 628H1278L1272 524Q1230 502 1214 470ZM1208 510Q1252 520 1274 604L1262 606Q1240 540 1208 510ZM1328 582Q1372 566 1398 600Q1362 614 1328 600Z" fill="#52625a"/><path d="M1300 470Q1320 380 1342 340L1350 346Q1330 400 1312 476Z" fill="#6b7b6e"/><path d="M835 642Q848 588 902 598Q952 610 968 642L905 705Z" fill="#b7773b"/><path d="M1110 742Q1150 700 1200 690Q1230 642 1292 620Q1344 618 1336 682Q1322 742 1290 772Q1200 792 1130 772Z" fill="#95531f"/><path d="M1200 690Q1250 700 1290 772Q1200 792 1130 772Q1160 720 1200 690Z" fill="#c68a4b"/><g stroke="#b3b6ba" stroke-width="9" fill="none" stroke-linecap="round"><path d="M1222 782V962M1222 858L1132 850L1106 922M1222 862L1352 942M1222 872L1292 884"/></g><polygon points="1000,700 1096,700 1102,975 984,975" fill="url(#gPed)"/><ellipse cx="1022" cy="682" rx="190" ry="44" fill="#c4a071"/><ellipse cx="1020" cy="668" rx="192" ry="43" fill="#ebd9bb"/><ellipse cx="1022" cy="660" rx="26" ry="9" fill="#cfc6b8"/><ellipse cx="1022" cy="642" rx="46" ry="12" fill="#f6f3ec"/><path d="M800 772Q842 728 902 740Q1002 760 1032 802L1092 812Q1082 884 1042 924Q950 944 880 922Q810 862 800 772Z" fill="url(#gCh)"/><path d="M800 772Q842 728 902 740Q1002 760 1032 802Q960 800 900 830Q850 820 800 772Z" fill="#b4733a"/><circle cx="812" cy="884" r="10" fill="#3a3a3a"/><circle cx="948" cy="938" r="10" fill="#3a3a3a"/></g></svg>
<div class="txt">
<span class="t" style="left:41px;top:27px;font-size:29.2px;color:#141414;-webkit-text-stroke:0.5px #141414;transform:scaleX(0.9767)">Office space</span>
<span class="t" style="left:41px;top:82px;font-size:18.7px;color:#161616;-webkit-text-stroke:0.42px #161616;transform:scaleX(0.9810)">Name</span>
<span class="t" style="left:561px;top:82px;font-size:18.7px;color:#161616;-webkit-text-stroke:0.42px #161616;transform:scaleX(0.9528)">Cover</span>
<span class="t" style="left:49px;top:129px;font-size:21px;color:#1c1c1c;transform:scaleX(1.0032)">Private office suite</span>
<span class="t" style="left:41px;top:198px;font-size:18.7px;color:#161616;-webkit-text-stroke:0.42px #161616;transform:scaleX(0.9712)">Category</span>
<span class="t" style="left:51px;top:244px;font-size:21px;color:#1c1c1c;transform:scaleX(0.9913)">Office</span>
<span class="t" style="left:41px;top:318px;font-size:18.7px;color:#161616;-webkit-text-stroke:0.42px #161616;transform:scaleX(0.9878)">Number of seats</span>
<span class="t" style="left:561px;top:318px;font-size:18.7px;color:#161616;-webkit-text-stroke:0.42px #161616;transform:scaleX(0.9686)">Surface</span>
<span class="t" style="left:51px;top:364px;font-size:21px;color:#1c1c1c;transform:scaleX(0.9374)">8</span>
<span class="t" style="left:570px;top:364px;font-size:21px;color:#1c1c1c;transform:scaleX(0.9605)">280</span>
<span class="t" style="left:1009px;top:365px;font-size:19.5px;font-weight:700;color:#141414;transform:scaleX(1.0429)">ft²</span>
<span class="t" style="left:41px;top:424px;font-size:18.7px;color:#161616;-webkit-text-stroke:0.42px #161616;transform:scaleX(1.0265)">Description</span>
<span class="t" style="left:50px;top:465px;font-size:21px;color:#1c1c1c;transform:scaleX(1.0098)">Fully furnished private office for focused work or small team meetings.</span>
<span class="t" style="left:41px;top:598px;font-size:18.5px;font-weight:700;color:#141414;transform:scaleX(0.9461)">PRICING</span>
<span class="t" style="left:797px;top:598px;font-size:16.8px;font-weight:700;color:#2148d8;transform:scaleX(0.9054)">+ Add pricing and opening hours</span>
<span class="t" style="left:53px;top:654px;font-size:18.2px;color:#6b6b6b;transform:scaleX(1.0387)">Groups</span>
<span class="t" style="left:302px;top:654px;font-size:18.2px;color:#6b6b6b;transform:scaleX(1.1198)">Pricing</span>
<span class="t" style="left:552px;top:654px;font-size:18.2px;color:#6b6b6b;transform:scaleX(1.0764)">Opening hours</span>
<span class="t" style="left:803px;top:654px;font-size:18.2px;color:#6b6b6b;transform:scaleX(1.0514)">Status</span>
<span class="t" style="left:53px;top:716px;font-size:18.2px;font-weight:700;color:#161616;transform:scaleX(1.0345)">Members</span>
<span class="t" style="left:304px;top:717px;font-size:18.2px;color:#161616;transform:scaleX(1.0536)">$80/hour - $400/day</span>
<span class="t" style="left:552px;top:717px;font-size:18.2px;color:#161616;transform:scaleX(1.0139)">24/7 access</span>
<span class="t" style="left:810px;top:719px;font-size:16px;font-weight:700;color:#7c95ab;transform:scaleX(0.9494)">Live</span>
<span class="t" style="left:53px;top:785px;font-size:18.2px;font-weight:700;color:#161616;transform:scaleX(1.0433)">Non-members</span>
<span class="t" style="left:304px;top:785px;font-size:18.2px;color:#161616;transform:scaleX(1.0527)">$120/hour - $600/day</span>
<span class="t" style="left:553px;top:785px;font-size:18.2px;color:#161616;transform:scaleX(1.0507)">Space opening hours</span>
<span class="t" style="left:810px;top:787px;font-size:16px;font-weight:700;color:#7c95ab;transform:scaleX(0.9494)">Live</span>
<span class="t" style="left:41px;top:880px;font-size:18.5px;font-weight:700;color:#141414;transform:scaleX(0.9199)">FORM FIELD</span>
<span class="t" style="left:943px;top:880px;font-size:16.8px;font-weight:700;color:#2148d8;transform:scaleX(0.9132)">+ Add a field</span>
<span class="t" style="left:53px;top:942px;font-size:18.2px;color:#6b6b6b;transform:scaleX(1.0881)">Label</span>
<span class="t" style="left:372px;top:942px;font-size:18.2px;color:#6b6b6b;transform:scaleX(1.0369)">Type</span>
<span class="t" style="left:689px;top:942px;font-size:18.2px;color:#6b6b6b;transform:scaleX(1.0695)">Required</span>
<span class="t" style="left:54px;top:1012px;font-size:18.2px;font-weight:700;color:#161616;transform:scaleX(1.0315)">Seating arrangement</span>
<span class="t" style="left:371px;top:1012px;font-size:18.2px;color:#161616;transform:scaleX(1.1033)">Dropdown</span>
<span class="t" style="left:54px;top:1082px;font-size:18.2px;font-weight:700;color:#161616;transform:scaleX(1.0339)">Special equipment needed</span>
<span class="t" style="left:371px;top:1082px;font-size:18.2px;color:#161616;transform:scaleX(1.0562)">Long text</span>
<span class="t" style="left:1116px;top:144px;font-size:18.2px;color:#1a1a1a;transform:scaleX(1.0497)">Main information</span>
<span class="t" style="left:1117px;top:180px;font-size:18.2px;color:#1a1a1a;transform:scaleX(1.0071)">Amenities</span>
<span class="t" style="left:1116px;top:216px;font-size:18.2px;color:#1a1a1a;transform:scaleX(1.0366)">Preparation time</span>
<span class="t" style="left:1117px;top:252px;font-size:18.2px;color:#1a1a1a;transform:scaleX(1.0110)">About</span>
<span class="t" style="left:1116px;top:288px;font-size:18.2px;color:#1a1a1a;transform:scaleX(1.0183)">Documents</span>
<span class="t" style="left:1117px;top:324px;font-size:18.2px;color:#1a1a1a;transform:scaleX(0.9399)">Taxes</span>
<span class="t" style="left:1116px;top:360px;font-size:18.2px;color:#1a1a1a;transform:scaleX(1.0081)">Policies</span>
<span class="t" style="left:1116px;top:396px;font-size:18.2px;color:#2350d8;transform:scaleX(1.0786)">Pricing</span>
<span class="t" style="left:1116px;top:432px;font-size:18.2px;color:#1a1a1a;transform:scaleX(1.0180)">Booking dependencies</span>
<span class="t" style="left:1116px;top:468px;font-size:18.2px;color:#1a1a1a;transform:scaleX(1.0316)">Redirect after public booking</span>
<span class="t" style="left:1116px;top:504px;font-size:18.2px;color:#1a1a1a;transform:scaleX(1.0346)">Form field</span>
</div>
</section>
</body></html>
